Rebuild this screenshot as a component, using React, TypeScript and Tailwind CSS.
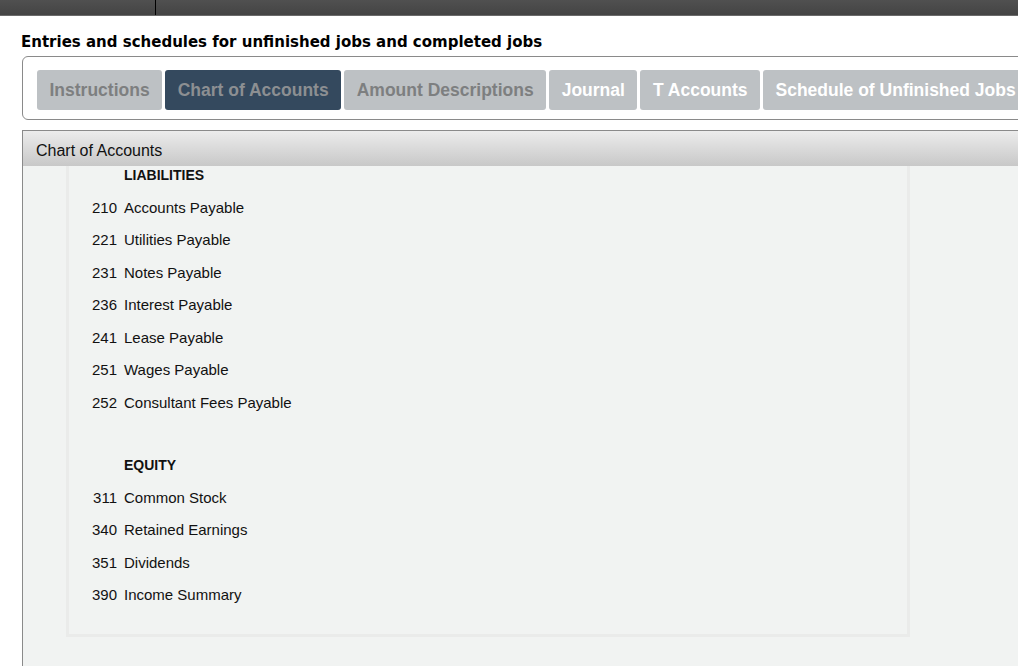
import React from "react";

type Account = { no: string; name: string };

const liabilities: Account[] = [
  { no: "210", name: "Accounts Payable" },
  { no: "221", name: "Utilities Payable" },
  { no: "231", name: "Notes Payable" },
  { no: "236", name: "Interest Payable" },
  { no: "241", name: "Lease Payable" },
  { no: "251", name: "Wages Payable" },
  { no: "252", name: "Consultant Fees Payable" },
];

const equity: Account[] = [
  { no: "311", name: "Common Stock" },
  { no: "340", name: "Retained Earnings" },
  { no: "351", name: "Dividends" },
  { no: "390", name: "Income Summary" },
];

const tabs = [
  { label: "Instructions", state: "muted" },
  { label: "Chart of Accounts", state: "active" },
  { label: "Amount Descriptions", state: "muted" },
  { label: "Journal", state: "light" },
  { label: "T Accounts", state: "light" },
  { label: "Schedule of Unfinished Jobs", state: "light" },
];

const AccountRows: React.FC<{ rows: Account[] }> = ({ rows }) => (
  <div className="flex flex-col gap-[13.5px]">
    {rows.map((r) => (
      <div key={r.no} className="flex h-[19px] items-center text-[15px] text-[#111]">
        <span className="w-[28px] text-right">{r.no}</span>
        <span className="ml-[7px]">{r.name}</span>
      </div>
    ))}
  </div>
);

export default function App() {
  return (
    <div className="h-[666px] w-[1018px] overflow-hidden bg-white font-['Liberation_Sans',Arial,sans-serif]">
      {/* top toolbar, mostly scrolled away */}
      <div className="flex h-[16px] overflow-hidden border-b border-[#6a6a6a] bg-gradient-to-b from-[#505050] to-[#444]">
        <div className="w-[156px] border-r border-black" />
      </div>

      <h1 className="ml-[21px] mt-[17px] font-['DejaVu_Sans',Verdana,sans-serif] text-[15px] font-bold leading-[18px] text-black">
        Entries and schedules for unfinished jobs and completed jobs
      </h1>

      <div className="ml-[22px] mt-[5px] flex h-[64px] w-[1100px] items-start gap-[3px] rounded-[6px] border border-[#8a8a8a] pl-[14px] pt-[13px]">
        {tabs.map((t) => (
          <div
            key={t.label}
            className={`flex h-[40px] shrink-0 items-center whitespace-nowrap rounded-[3px] px-[12.5px] text-[17.5px] font-bold ${
              t.state === "active"
                ? "bg-[#34495e] text-[#8c8f92]"
                : t.state === "muted"
                ? "bg-[#bdc1c4] text-[#7d7f80]"
                : "bg-[#bdc1c4] text-white"
            }`}
          >
            {t.label}
          </div>
        ))}
      </div>

      <div className="ml-[22px] mt-[10px] h-[600px] w-[1100px] border border-[#8a8a8a] bg-[#f1f3f2]">
        <div className="flex h-[35px] items-start bg-gradient-to-b from-[#ececec] to-[#c8c8c8] pl-[13px] pt-[11px] text-[16px] leading-[18px] text-[#111]">
          Chart of Accounts
        </div>
        <div className="ml-[43px] h-[471px] w-[844px] border-x-[3px] border-b-[3px] border-[#eaebea] pl-[20px]">
          <div className="ml-[35px] h-[19px] text-[14px] font-bold leading-[19px] text-[#111]">LIABILITIES</div>
          <div className="mt-[13.5px]">
            <AccountRows rows={liabilities} />
          </div>
          <div className="ml-[35px] mt-[43px] h-[19px] text-[14px] font-bold leading-[19px] text-[#111]">EQUITY</div>
          <div className="mt-[14px]">
            <AccountRows rows={equity} />
          </div>
        </div>
      </div>
    </div>
  );
}
